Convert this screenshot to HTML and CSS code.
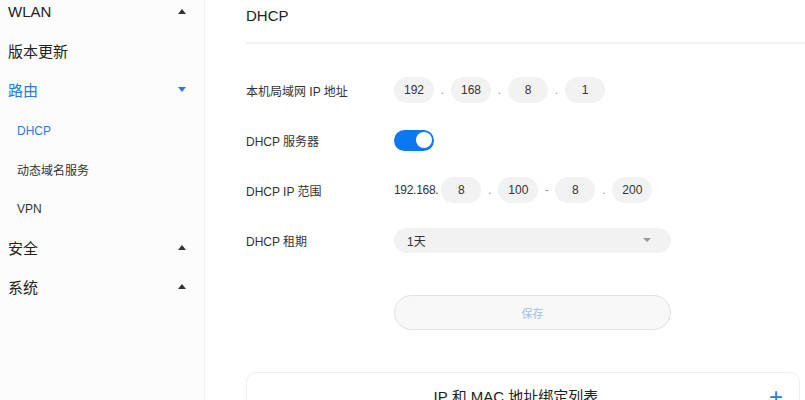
FILE: index.html
```html
<!DOCTYPE html>
<html lang="zh-CN">
<head>
    <meta charset="UTF-8">
    <title>路由 - DHCP</title>
    <link rel="stylesheet" href="styles.css">
</head>
<body>
    <div class="page">
        <!-- 左边菜单 -->
        <ul class="menu">
            <li class="menu-item">WLAN<span class="caret up"></span></li>
            <li class="menu-item">版本更新</li>
            <li class="menu-item open">路由<span class="caret down"></span></li>
            <li class="sub-item active">DHCP</li>
            <li class="sub-item">动态域名服务</li>
            <li class="sub-item">VPN</li>
            <li class="menu-item">安全<span class="caret up"></span></li>
            <li class="menu-item">系统<span class="caret up"></span></li>
        </ul>

        <!-- 右边内容 -->
        <div class="main">
            <div class="title">DHCP</div>

            <div class="form">
                <div class="row">
                    <div class="label">本机局域网 IP 地址</div>
                    <div class="field">
                        <span class="pill">192</span><span class="sep">.</span>
                        <span class="pill">168</span><span class="sep">.</span>
                        <span class="pill">8</span><span class="sep">.</span>
                        <span class="pill">1</span>
                    </div>
                </div>
                <div class="row">
                    <div class="label">DHCP 服务器</div>
                    <div class="field">
                        <span class="switch on"><span class="knob"></span></span>
                    </div>
                </div>
                <div class="row">
                    <div class="label">DHCP IP 范围</div>
                    <div class="field">
                        <span class="prefix">192.168.</span>
                        <span class="pill">8</span><span class="sep">.</span>
                        <span class="pill">100</span><span class="sep">-</span>
                        <span class="pill">8</span><span class="sep">.</span>
                        <span class="pill">200</span>
                    </div>
                </div>
                <div class="row">
                    <div class="label">DHCP 租期</div>
                    <div class="field">
                        <div class="select">1天<span class="arrow"></span></div>
                    </div>
                </div>
                <div class="actions">
                    <button type="button" class="save">保存</button>
                </div>
            </div>

            <div class="card">
                <div class="card-title">IP 和 MAC 地址绑定列表</div>
                <span class="plus">+</span>
            </div>
        </div>
    </div>
</body>
</html>
```

FILE: styles.css
```css
/* 整体 */
body{
    margin: 0;
    background-color: #fff;
    font-family: "Liberation Sans", "Noto Sans CJK SC", sans-serif;
    color: #333;
    overflow: hidden;
}
.page{
    display: flex;
    height: 400px;
    overflow: hidden;
}
/* 左边菜单 */
.menu{
    width: 204px;
    flex-shrink: 0;
    margin: -8px 0 0 0;
    padding: 0;
    list-style: none;
    background-color: #fcfcfc;
    border-right: 1px solid #f2f2f2;
}
.menu-item{
    height: 39px;
    display: flex;
    align-items: center;
    justify-content: space-between;
    padding: 0 18px 0 8px;
    font-size: 15px;
    color: #222;
}
.menu-item.open{
    color: #2b7bd6;
}
.sub-item{
    height: 39px;
    display: flex;
    align-items: center;
    padding-left: 17px;
    font-size: 12px;
    color: #333;
}
.sub-item.active{
    color: #2b7bd6;
    margin-top: 2px;
}
.caret{
    width: 0;
    height: 0;
    border-left: 4px solid transparent;
    border-right: 4px solid transparent;
}
.caret.up{
    border-bottom: 5px solid #333;
}
.caret.down{
    border-top: 5px solid #2b7bd6;
}
/* 右边 */
.main{
    flex: 1;
    padding-left: 41px;
}
.title{
    height: 44px;
    box-sizing: border-box;
    padding-top: 6px;
    line-height: 20px;
    font-size: 15px;
    color: #222;
    border-bottom: 2px solid #f2f2f2;
}
.form{
    padding-top: 21px;
}
.row{
    height: 50px;
    display: flex;
    align-items: center;
}
.label{
    width: 148px;
    font-size: 12px;
    color: #333;
}
.field{
    display: flex;
    align-items: center;
    font-size: 12px;
}
.pill{
    width: 40px;
    height: 26px;
    line-height: 26px;
    border-radius: 13px;
    background-color: #f2f2f2;
    text-align: center;
    color: #333;
}
.sep{
    width: 17px;
    text-align: center;
    color: #999;
}
.prefix{
    margin-right: 3px;
    letter-spacing: -0.3px;
}
/* 开关 */
.switch{
    width: 40px;
    height: 21px;
    border-radius: 11px;
    background-color: #0a78f0;
    display: flex;
    align-items: center;
    justify-content: flex-end;
    padding: 0 2px;
    box-sizing: border-box;
}
.knob{
    width: 16px;
    height: 16px;
    border-radius: 50%;
    background-color: #fff;
}
/* 下拉 */
.select{
    width: 277px;
    height: 25px;
    box-sizing: border-box;
    border-radius: 13px;
    background-color: #f2f2f2;
    padding: 0 20px 0 13px;
    display: flex;
    align-items: center;
    justify-content: space-between;
    font-size: 12px;
    color: #333;
}
.arrow{
    width: 0;
    height: 0;
    border-left: 4px solid transparent;
    border-right: 4px solid transparent;
    border-top: 4px solid #999;
}
/* 保存 */
.actions{
    padding: 30px 0 0 148px;
}
.save{
    width: 277px;
    height: 35px;
    border-radius: 18px;
    border: 1px solid #e2e2e2;
    background-color: #f8f8f8;
    color: #9cc0e8;
    font-size: 11px;
    font-family: "Liberation Sans", "Noto Sans CJK SC", sans-serif;
    display: block;
}
/* 下面的列表 */
.card{
    margin: 42px 5px 0 0;
    border: 1px solid #efefef;
    border-radius: 10px;
    display: flex;
    align-items: flex-start;
    padding: 14px 16px 0 16px;
    height: 60px;
}
.card-title{
    flex: 1;
    text-align: center;
    font-size: 15px;
    line-height: 20px;
    color: #222;
}
.plus{
    font-size: 24px;
    line-height: 20px;
    color: #2b7bd6;
    font-weight: 300;
}
```
